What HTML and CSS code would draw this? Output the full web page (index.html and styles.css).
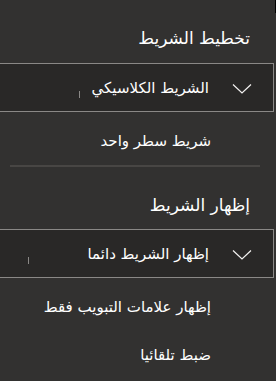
FILE: index.html
```html
<!DOCTYPE html>
<html lang="ar" dir="rtl">
<head>
    <meta charset="UTF-8">
    <meta name="viewport" content="width=device-width, initial-scale=1.0">
    <title>خيارات عرض الشريط</title>
    <link rel="stylesheet" href="styles.css">
</head>
<body>
    <div class="edge"></div>
    <div class="panel">
        <!-- Ribbon layout -->
        <h2 class="heading">تخطيط الشريط</h2>
        <div class="dropdown">
            <svg class="chevron" width="20" height="11" viewBox="0 0 20 11">
                <path d="M1 1.5 L10 10 L19 1.5" fill="none" stroke="#f3f2f1" stroke-width="1.2"/>
            </svg>
            <span class="value">الشريط الكلاسيكي</span>
            <span class="tick tick-one"></span>
        </div>
        <div class="option">شريط سطر واحد</div>

        <div class="separator"></div>

        <!-- Show ribbon -->
        <h2 class="heading heading-second">إظهار الشريط</h2>
        <div class="dropdown">
            <svg class="chevron" width="20" height="11" viewBox="0 0 20 11">
                <path d="M1 1.5 L10 10 L19 1.5" fill="none" stroke="#f3f2f1" stroke-width="1.2"/>
            </svg>
            <span class="value">إظهار الشريط دائما</span>
            <span class="tick tick-two"></span>
        </div>
        <div class="option">إظهار علامات التبويب فقط</div>
        <div class="option">ضبط تلقائيا</div>
    </div>
</body>
</html>
```
FILE: styles.css
```css
body {
    margin: 0;
    padding: 0;
    background-color: #323130;
    color: #ffffff;
    font-family: "Segoe UI", "DejaVu Sans", sans-serif;
    overflow: hidden;
}
.edge {
    position: absolute;
    top: 0;
    right: 0;
    width: 1px;
    height: 13px;
    background: #000000;
}
.panel {
    display: flex;
    flex-direction: column;
}
.heading {
    margin: 28px 26px 15px 0;
    font-size: 17px;
    font-weight: normal;
    line-height: 20px;
    height: 20px;
}
.heading-second {
    margin-top: 28px;
    margin-bottom: 14px;
}
.dropdown {
    position: relative;
    display: flex;
    align-items: center;
    height: 47px;
    margin: 0 2px 5px -2px;
    padding-right: 21px;
    border: 1px solid #8a8886;
    background-color: #292827;
    font-size: 15px;
}
.chevron {
    display: block;
    margin-left: 23px;
    margin-top: 2px;
}
.value {
    line-height: 20px;
}
.tick {
    position: absolute;
    top: 27px;
    width: 1px;
    height: 7px;
    background: #8a8886;
}
.tick-one {
    left: 80px;
}
.tick-two {
    left: 29px;
}
.option {
    height: 48px;
    line-height: 48px;
    padding-right: 65px;
    font-size: 15px;
}
.separator {
    height: 2px;
    margin: 0 16px 0 10px;
    background-color: #484644;
}
```
